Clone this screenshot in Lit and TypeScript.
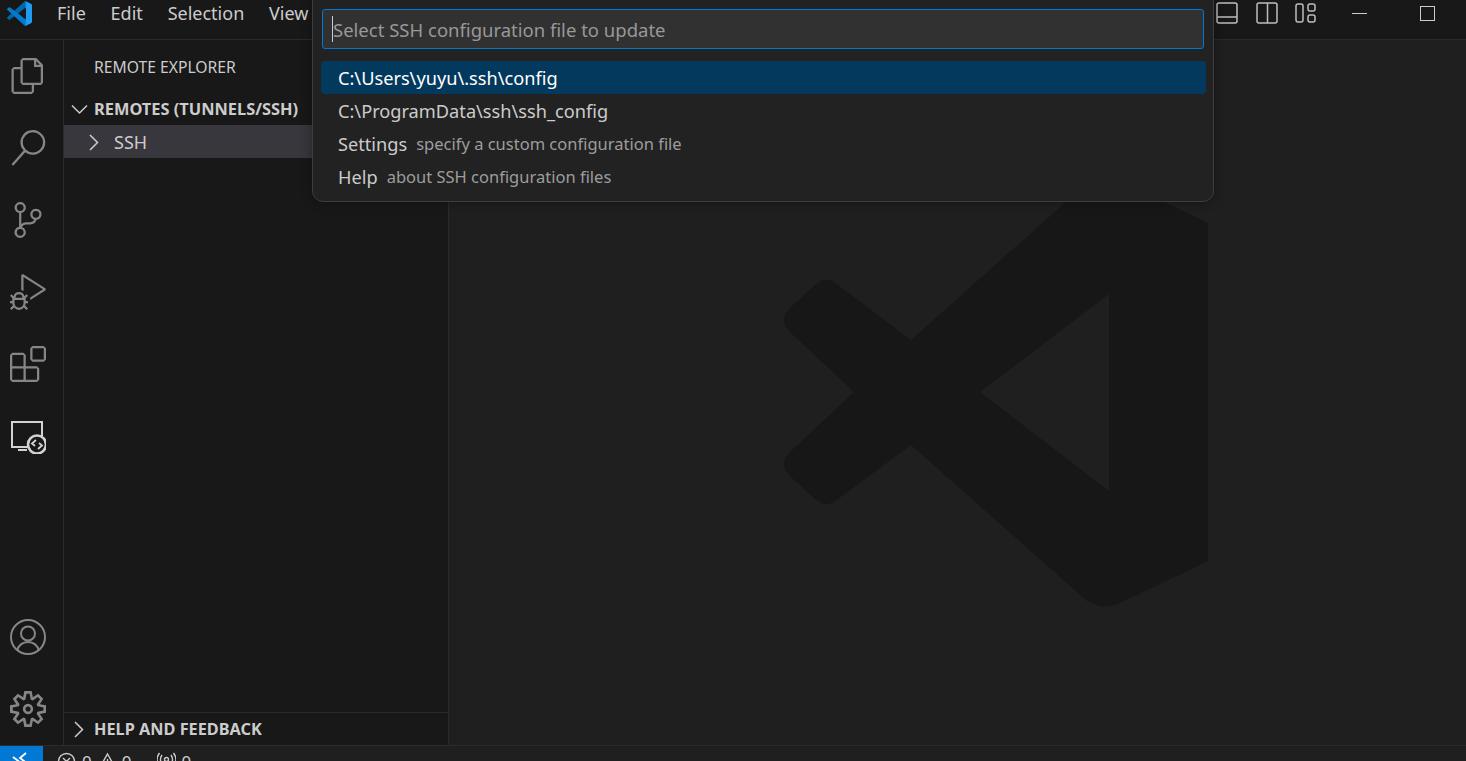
import { LitElement, css, html, svg } from 'lit'
import { customElement } from 'lit/decorators.js'

const menus = ['File', 'Edit', 'Selection', 'View']

// activity bar icons, 24 unit grid drawn at 36px
const files = 'M17.5 0h-9L7 1.5V6H2.5L1 7.5v15.07L2.5 24h12.07L16 22.57V18h4.7l1.3-1.43V4.5L17.5 0zm0 2.12l2.38 2.38H17.5V2.12zm-3 20.38h-12v-15H7v9.07L8.5 18h6v4.5zm6-6h-12v-15H16V6h4.5v10.5z'
const search = 'M15.25 0a8.25 8.25 0 0 0-6.18 13.72L1 22.88l1.12 1 8.05-9.12A8.25 8.25 0 1 0 15.25.01V0zm0 15a6.75 6.75 0 1 1 0-13.5 6.75 6.75 0 0 1 0 13.5z'
const scm = 'M21.007 8.222A3.738 3.738 0 0 0 15.045 5.2a3.737 3.737 0 0 0 1.156 6.583 2.988 2.988 0 0 1-2.668 1.67h-2.99a4.456 4.456 0 0 0-2.989 1.165V7.4a3.737 3.737 0 1 0-1.494 0v9.117a3.776 3.776 0 1 0 1.816.099 2.99 2.99 0 0 1 2.668-1.667h2.99a4.484 4.484 0 0 0 4.223-3.039 3.736 3.736 0 0 0 3.25-3.687zM4.565 3.738a2.242 2.242 0 1 1 4.484 0 2.242 2.242 0 0 1-4.484 0zm4.484 16.441a2.242 2.242 0 1 1-4.484 0 2.242 2.242 0 0 1 4.484 0zm8.221-9.715a2.242 2.242 0 1 1 0-4.485 2.242 2.242 0 0 1 0 4.485z'
const debug = 'M10.94 13.5l-1.32 1.32a3.73 3.73 0 0 0-7.24 0L1.06 13.5 0 14.56l1.72 1.72-.22.22V18H0v1.5h1.5v.08c.077.489.214.966.41 1.42L0 22.94 1.06 24l1.65-1.65A4.308 4.308 0 0 0 6 24a4.31 4.31 0 0 0 3.29-1.65L10.94 24 12 22.94 10.09 21c.198-.464.336-.951.41-1.45v-.1H12V18h-1.5v-1.5l-.22-.22L12 14.56l-1.06-1.06zM6 13.5a2.25 2.25 0 0 1 2.25 2.25h-4.5A2.25 2.25 0 0 1 6 13.5zm3 6a3.33 3.33 0 0 1-3 3 3.33 3.33 0 0 1-3-3v-2.25h6v2.25zm14.76-9.9v1.26L13.5 17.37V15.6l8.5-5.37L9 2v9.46a5.07 5.07 0 0 0-1.5-.72V.63L8.64 0l15.12 9.6z'
const extensions = 'M13.5 1.5L15 0h7.5L24 1.5V9l-1.5 1.5H15L13.5 9V1.5zm1.5 0V9h7.5V1.5H15zM0 15V6l1.5-1.5H9L10.5 6v7.5H18l1.5 1.5v7.5L18 24H1.5L0 22.5V15zm9-1.5V6H1.5v7.5H9zM9 15H1.5v7.5H9V15zm1.5 7.5H18V15h-7.5v7.5z'
const gear = 'M19.85 8.75l4.15.83v4.84l-4.15.83 2.35 3.52-3.43 3.43-3.52-2.35-.83 4.15H9.58l-.83-4.15-3.52 2.35-3.43-3.43 2.35-3.52L0 14.42V9.58l4.15-.83L1.8 5.23 5.23 1.8l3.52 2.35L9.58 0h4.84l.83 4.15 3.52-2.35 3.43 3.43-2.35 3.52zm-1.57 5.07l4-.81v-2l-4-.81-.54-1.3 2.29-3.43-1.43-1.43-3.43 2.29-1.3-.54-.81-4h-2l-.81 4-1.3.54-3.43-2.29-1.43 1.43L6.38 8.9l-.54 1.3-4 .81v2l4 .81.54 1.3-2.29 3.43 1.43 1.43 3.43-2.29 1.3.54.81 4h2l.81-4 1.3-.54 3.43 2.29 1.43-1.43-2.29-3.43.54-1.3zm-8.186-4.672A3.43 3.43 0 0 1 12 8.57 3.44 3.44 0 0 1 15.43 12a3.43 3.43 0 1 1-5.336-2.852zm.956 4.274c.281.188.612.288.95.288A1.7 1.7 0 0 0 13.71 12a1.71 1.71 0 1 0-2.66 1.422z'

const topIcons = [files, search, scm, debug, extensions]

const logoMask = 'M70.91 99.32c1.58.61 3.37.57 4.96-.19l20.59-9.91A6.25 6.25 0 0 0 100 83.59V16.41a6.25 6.25 0 0 0-3.54-5.63L75.87.87a6.24 6.24 0 0 0-7.1 1.21L29.36 38.04 12.19 25.01a4.16 4.16 0 0 0-5.32.24l-5.51 5.01a4.17 4.17 0 0 0 0 6.16L16.25 50 1.36 63.58a4.17 4.17 0 0 0 0 6.16l5.51 5.01a4.16 4.16 0 0 0 5.32.24l17.17-13.03 39.41 35.96c.62.62 1.36 1.09 2.14 1.4zM75.02 27.3 45.11 50l29.91 22.7V27.3z'

const watermark = svg`<path d="M1208 223v338l-88 42c-12 6-24 4-34-3L911 445l-73 54c-8 7-16 7-24-1l-24-22c-8-8-8-16 0-24l64-60-64-60c-8-8-8-16 0-24l24-22c8-8 16-8 24-1l73 55 175-156c10-7 22-9 34-3zM1109 294l-129 98 129 99z" fill-rule="evenodd"/>`

@customElement('app-root')
export class AppRoot extends LitElement {
  static styles = css`
    :host {
      display: block;
      width: 100vw;
      height: 100vh;
      overflow: hidden;
      position: relative;
      font-family: 'Noto Sans', 'Open Sans', sans-serif;
      color: #cccccc;
      background: #1f1f1f;
    }
    .window {
      width: 1542px;
      height: 776px;
      display: flex;
      flex-direction: column;
    }
    .titlebar {
      height: 39px;
      flex: none;
      display: flex;
      align-items: flex-start;
      background: #181818;
      border-bottom: 1px solid #2b2b2b;
    }
    .logo {
      width: 25px;
      height: 25px;
      margin: 1px 0 0 7px;
    }
    .menu {
      display: flex;
      margin-left: 25px;
      gap: 24.800px;
      font-size: 18px;
      line-height: 26px;
    }
    .title-actions {
      margin-left: auto;
      display: flex;
      align-items: flex-start;
      padding-right: 107px;
    }
    .title-actions svg {
      width: 22px;
      height: 22px;
      margin: 2px 0 0 17.500px;
      fill: none;
      stroke: #bdbdbd;
      stroke-width: 1.5;
    }
    .win-min {
      width: 15px;
      height: 1px;
      background: #cccccc;
      margin: 13px 0 0 35px;
    }
    .win-max {
      width: 13px;
      height: 13px;
      border: 1px solid #cccccc;
      margin: 6px 0 0 53px;
    }
    .body {
      flex: 1;
      display: flex;
      min-height: 0;
    }
    .activity {
      width: 63px;
      flex: none;
      display: flex;
      flex-direction: column;
      background: #181818;
      border-right: 1px solid #2b2b2b;
    }
    .spacer {
      flex: 1;
    }
    .act {
      height: 72px;
      flex: none;
      padding-right: 7px;
      display: flex;
      align-items: center;
      justify-content: center;
    }
    .act svg {
      width: 36px;
      height: 36px;
      fill: #868686;
    }
    .line-icon {
      fill: none !important;
      stroke: #868686;
      stroke-width: 2;
    }
    .act.on .line-icon {
      stroke: #d2d2d2;
      stroke-width: 2;
    }
    .sidebar {
      width: 384px;
      flex: none;
      display: flex;
      flex-direction: column;
      background: #181818;
      border-right: 1px solid #2b2b2b;
    }
    .side-title {
      height: 54px;
      padding-left: 30px;
      font-size: 15.700px;
      line-height: 54px;
    }
    .section {
      height: 29px;
      padding-bottom: 2px;
      display: flex;
      align-items: center;
      font-size: 16.400px;
      font-weight: 700;
    }
    .section svg,
    .row svg {
      width: 22px;
      height: 22px;
      fill: none;
      stroke: #cccccc;
      stroke-width: 1.500;
      flex: none;
    }
    .section svg {
      margin: 0 4px 0 4px;
    }
    .row {
      height: 33px;
      display: flex;
      align-items: center;
      background: #37373d;
      font-size: 18px;
    }
    .row svg {
      margin: 0 9px 0 19px;
    }
    .help {
      height: 31px;
      padding-bottom: 1px;
      border-top: 1px solid #2b2b2b;
      font-size: 16.300px;
    }
    .editor {
      flex: 1;
      background: #1f1f1f;
      position: relative;
    }
    .watermark {
      position: absolute;
      left: -449px;
      top: -40px;
      width: 1542px;
      height: 768px;
      fill: #171717;
    }
    .status {
      height: 30px;
      flex: none;
      display: flex;
      align-items: center;
      background: #1f1f1f;
      border-top: 1px solid #2b2b2b;
      font-size: 17px;
      color: #cccccc;
    }
    .remote {
      width: 43px;
      height: 100%;
      background: #0078d4;
      display: flex;
      justify-content: center;
      align-items: center;
    }
    .remote svg {
      width: 22px;
      height: 22px;
      fill: none;
      stroke: #ffffff;
      stroke-width: 1.800;
    }
    .st {
      display: flex;
      align-items: center;
      gap: 5px;
    }
    .st svg {
      width: 19px;
      height: 19px;
      fill: none;
      stroke: #cccccc;
      stroke-width: 1.400;
    }
    .st.errors {
      margin-left: 14px;
      gap: 6px;
    }
    .st.warnings {
      margin-left: 6px;
    }
    .st.ports {
      margin-left: 26px;
    }
    .quick {
      position: absolute;
      left: 312px;
      top: -1px;
      width: 900px;
      height: 201px;
      background: #222222;
      border: 1px solid #3d3d3d;
      border-radius: 0 0 11px 11px;
      box-shadow: 0 0 11px rgba(0, 0, 0, 0.36);
    }
    .input {
      margin: 9px 9px 0 9px;
      height: 38px;
      background: #313131;
      border: 1px solid #0078d4;
      border-radius: 3px;
      display: flex;
      align-items: center;
      font-size: 18.500px;
      color: #989898;
      padding-left: 10px;
      position: relative;
    }
    .caret {
      position: absolute;
      left: 9px;
      top: 6px;
      width: 1px;
      height: 26px;
      background: #cccccc;
    }
    .list {
      margin: 12px 7px 0 8px;
    }
    .item {
      height: 33px;
      display: flex;
      align-items: center;
      padding-left: 17px;
      font-size: 18.200px;
      border-radius: 4px;
    }
    .item.sel {
      background: #04395e;
      color: #ffffff;
    }
    .desc {
      font-size: 16.500px;
      color: #9d9d9d;
      margin-left: 9px;
    }
  `

  render() {
    const chevDown = svg`<path d="M4 7.500 11.500 15 19 7.500"/>`
    const chevRight = svg`<path d="M7 4l7.500 7.500L7 19"/>`
    return html`
      <div class="window">
        <div class="titlebar">
          <svg class="logo" viewBox="0 0 100 100">
            <defs><clipPath id="logo-clip"><path clip-rule="evenodd" d="${logoMask}"/></clipPath></defs>
            <g clip-path="url(#logo-clip)">
              <path fill="#0065a9" d="M96.46 10.8 75.86.88a6.2 6.2 0 0 0-7.11 1.2L1.3 63.58a4.17 4.17 0 0 0 0 6.16l5.51 5.01a4.17 4.17 0 0 0 5.32.24l81.23-61.62c2.73-2.07 6.64-.12 6.64 3.3v-.24a6.26 6.26 0 0 0-3.54-5.63z"/>
              <path fill="#007acc" d="M96.46 89.2 75.86 99.12a6.2 6.2 0 0 1-7.11-1.2L1.3 36.42a4.17 4.17 0 0 1 0-6.16l5.51-5.01a4.17 4.17 0 0 1 5.32-.24l81.23 61.62c2.73 2.07 6.64.12 6.64-3.3v.24a6.26 6.26 0 0 1-3.54 5.63z"/>
              <path fill="#1f9cf0" d="M75.86 99.13a6.2 6.2 0 0 1-7.11-1.21c2.31 2.3 6.25.67 6.25-2.59V4.67c0-3.26-3.94-4.89-6.25-2.59a6.2 6.2 0 0 1 7.11-1.21l20.6 9.91A6.25 6.25 0 0 1 100 16.41v67.18a6.25 6.25 0 0 1-3.54 5.63z"/>
            </g>
          </svg>
          <div class="menu">${menus.map((m) => html`<span>${m}</span>`)}</div>
          <div class="title-actions">
            <svg viewBox="0 0 22 22"><rect x="1" y="1" width="20" height="20" rx="2"/><path d="M1 15h20"/></svg>
            <svg viewBox="0 0 22 22"><rect x="1" y="1" width="20" height="20" rx="2"/><path d="M11.500 1v20"/></svg>
            <svg viewBox="0 0 22 22"><rect x="1" y="2" width="7" height="18" rx="2"/><rect x="13" y="2" width="7" height="7" rx="2"/><rect x="13" y="13" width="7" height="7" rx="2"/></svg>
            <div class="win-min"></div>
            <div class="win-max"></div>
          </div>
        </div>
        <div class="body">
          <div class="activity">
            ${topIcons.map((d) => html`<div class="act"><svg viewBox="0 0 24 24"><path fill-rule="evenodd" d="${d}"/></svg></div>`)}
            <div class="act on">
              <svg class="line-icon" viewBox="0 0 36 36">
                <path d="M27 29H2V4h30v15"/><path d="M8 32h9"/>
                <circle cx="27" cy="26.500" r="9" fill="#181818" stroke-width="2.600"/>
                <path d="M26 22l-4 3.500 3 2.500M28 31l4-3.500-3-2.500" stroke-width="1.800"/>
              </svg>
            </div>
            <div class="spacer"></div>
            <div class="act">
              <svg class="line-icon" viewBox="0 0 36 36">
                <circle cx="18" cy="18" r="17"/><circle cx="18" cy="14.500" r="7"/>
                <path d="M7.500 31.500C8 26.500 12.500 23 18 23s10 3.500 10.500 8.500"/>
              </svg>
            </div>
            <div class="act"><svg viewBox="0 0 24 24"><path fill-rule="evenodd" d="${gear}"/></svg></div>
          </div>
          <div class="sidebar">
            <div class="side-title">REMOTE EXPLORER</div>
            <div class="section"><svg viewBox="0 0 22 22">${chevDown}</svg>REMOTES (TUNNELS/SSH)</div>
            <div class="row"><svg viewBox="0 0 22 22">${chevRight}</svg>SSH</div>
            <div class="spacer"></div>
            <div class="section help"><svg viewBox="0 0 22 22">${chevRight}</svg>HELP AND FEEDBACK</div>
          </div>
          <div class="editor">
            <svg class="watermark" viewBox="0 0 1542 768">${watermark}</svg>
          </div>
        </div>
        <div class="status">
          <div class="remote"><svg viewBox="0 0 22 22"><path d="M2 7l6 4.500-6 4.500M15 3 9 8l6 4.500"/></svg></div>
          <div class="st errors"><svg viewBox="0 0 19 19"><circle cx="9.500" cy="9.500" r="8"/><path d="M6 6l7 7M13 6l-7 7"/></svg>0</div>
          <div class="st warnings"><svg viewBox="0 0 19 19"><path d="M9.500 2 18 17H1z"/><path d="M9.500 7v5"/></svg>0</div>
          <div class="st ports"><svg viewBox="0 0 19 19"><circle cx="9.500" cy="7.500" r="2"/><path d="M8 10l-2 8M11 10l2 8M5 3c-2 3-2 6 0 9M14 3c2 3 2 6 0 9M2.500 1c-3 4-3 9 0 13M16.500 1c3 4 3 9 0 13"/></svg>0</div>
        </div>
      </div>
      <div class="quick">
        <div class="input"><span class="caret"></span>Select SSH configuration file to update</div>
        <div class="list">
          <div class="item sel">C:\\Users\\yuyu\\.ssh\\config</div>
          <div class="item">C:\\ProgramData\\ssh\\ssh_config</div>
          <div class="item">Settings<span class="desc">specify a custom configuration file</span></div>
          <div class="item">Help<span class="desc">about SSH configuration files</span></div>
        </div>
      </div>
    `
  }
}
